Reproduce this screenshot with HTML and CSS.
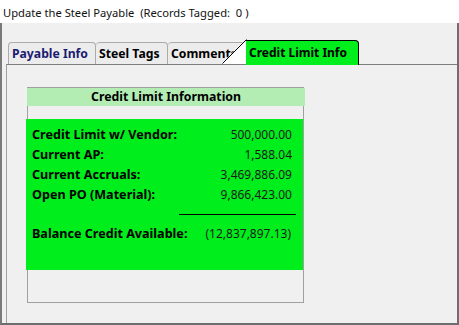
FILE: index.html
```html
<!DOCTYPE html>
<html>
<head>
<meta charset="utf-8">
<link rel="stylesheet" href="styles.css">
</head>
<body>
<div class="window">
  <div class="titlebar">Update the Steel Payable  (Records Tagged:  0 )</div>
  <div class="frame">
    <div class="tabstrip">
      <div class="tab tab-first">Payable Info</div>
      <div class="tab">Steel Tags</div>
      <div class="tab tab-cut">Comments</div>
      <div class="tab tab-active">Credit Limit Info</div>
      <svg class="tab-wedge" width="25" height="25" viewBox="0 0 25 25">
        <polygon points="0,24 24,0 24,25 0,25" fill="#ffffff"/>
        <line x1="0.5" y1="24.5" x2="24.5" y2="0.5" stroke="#000" stroke-width="1"/>
      </svg>
    </div>
    <div class="panel">
      <div class="groupbox">
        <div class="group-head">Credit Limit Information</div>
        <div class="group-body">
          <div class="row"><span class="lbl">Credit Limit w/ Vendor:</span><span class="val">500,000.00</span></div>
          <div class="row"><span class="lbl">Current AP:</span><span class="val">1,588.04</span></div>
          <div class="row"><span class="lbl">Current Accruals:</span><span class="val">3,469,886.09</span></div>
          <div class="row"><span class="lbl">Open PO (Material):</span><span class="val">9,866,423.00</span></div>
          <div class="rule"></div>
          <div class="row row-total"><span class="lbl">Balance Credit Available:</span><span class="val">(12,837,897.13)</span></div>
        </div>
      </div>
    </div>
  </div>
</div>
</body>
</html>
```
FILE: styles.css
```css
html, body {
  margin: 0;
  padding: 0;
}
body {
  width: 459px;
  height: 325px;
  overflow: hidden;
  background: #f0f0f0;
  font-family: "Noto Sans", "DejaVu Sans", sans-serif;
  font-size: 12px;
  color: #000;
}
.window {
  width: 459px;
  height: 325px;
  display: flex;
  flex-direction: column;
}
.titlebar {
  height: 23px;
  line-height: 26px;
  background: #ffffff;
  padding-left: 3px;
  white-space: pre;
  font-size: 11.2px;
  color: #111;
}
.frame {
  flex: 1;
  display: flex;
  flex-direction: column;
  border-left: 2px solid #7a7a7a;
  border-right: 2px solid #6e6e6e;
  border-bottom: 2px solid #6e6e6e;
  background: #f0f0f0;
}
.tabstrip {
  position: relative;
  height: 41px;
  display: flex;
  align-items: flex-end;
  padding-left: 6px;
}
.tab {
  height: 22px;
  box-sizing: border-box;
  border: 1px solid #ababab;
  border-bottom: none;
  border-radius: 4px 4px 0 0;
  background: #ececec;
  font-weight: bold;
  font-size: 12.2px;
  line-height: 22px;
  padding: 0 4px 0 3px;
  white-space: nowrap;
  overflow: hidden;
}
.tab-first {
  width: 88px;
  color: #1b1b72;
}
.tab + .tab {
  border-left: none;
}
.tab:nth-child(2) {
  width: 72px;
}
.tab-cut {
  width: 78px;
}
.tab-active {
  width: 113px;
  height: 25px;
  margin-bottom: -1px;
  background: #00ee1c;
  border: none;
  border-top: 1px solid #000;
  border-right: 1px solid #000;
  border-radius: 0 4px 0 0;
  line-height: 23px;
  padding-left: 3px;
  position: relative;
  z-index: 2;
  font-size: 12px;
}
.tab-wedge {
  position: absolute;
  left: 220px;
  top: 16px;
  z-index: 1;
}
.panel {
  flex: 1;
  margin-left: 4px;
  border-left: 1px solid #a0a0a0;
  border-top: 1px solid #7c7c7c;
  padding: 22px 0 0 20px;
}
.groupbox {
  width: 277px;
  height: 216px;
  box-sizing: border-box;
  border: 1px solid #a0a0a0;
}
.group-head {
  height: 18px;
  margin: 0 -2px 0 -1px;
  background: #b3edb3;
  text-align: center;
  font-weight: bold;
  font-size: 12.3px;
  line-height: 18px;
}
.group-body {
  margin: 13px 0 0 -2px;
  height: 151px;
  box-sizing: border-box;
  background: #00ee1c;
  padding: 5px 11px 0 6px;
}
.row {
  height: 20px;
  display: flex;
  justify-content: space-between;
  align-items: center;
}
.lbl {
  font-weight: bold;
  font-size: 12.6px;
}
.val {
  color: #1a1a1a;
}
.rule {
  height: 1px;
  background: #000;
  width: 117px;
  margin: 10px -4px 0 auto;
}
.row-total {
  margin-top: 8px;
}
.row-total .val {
  margin-right: 1px;
}
```
